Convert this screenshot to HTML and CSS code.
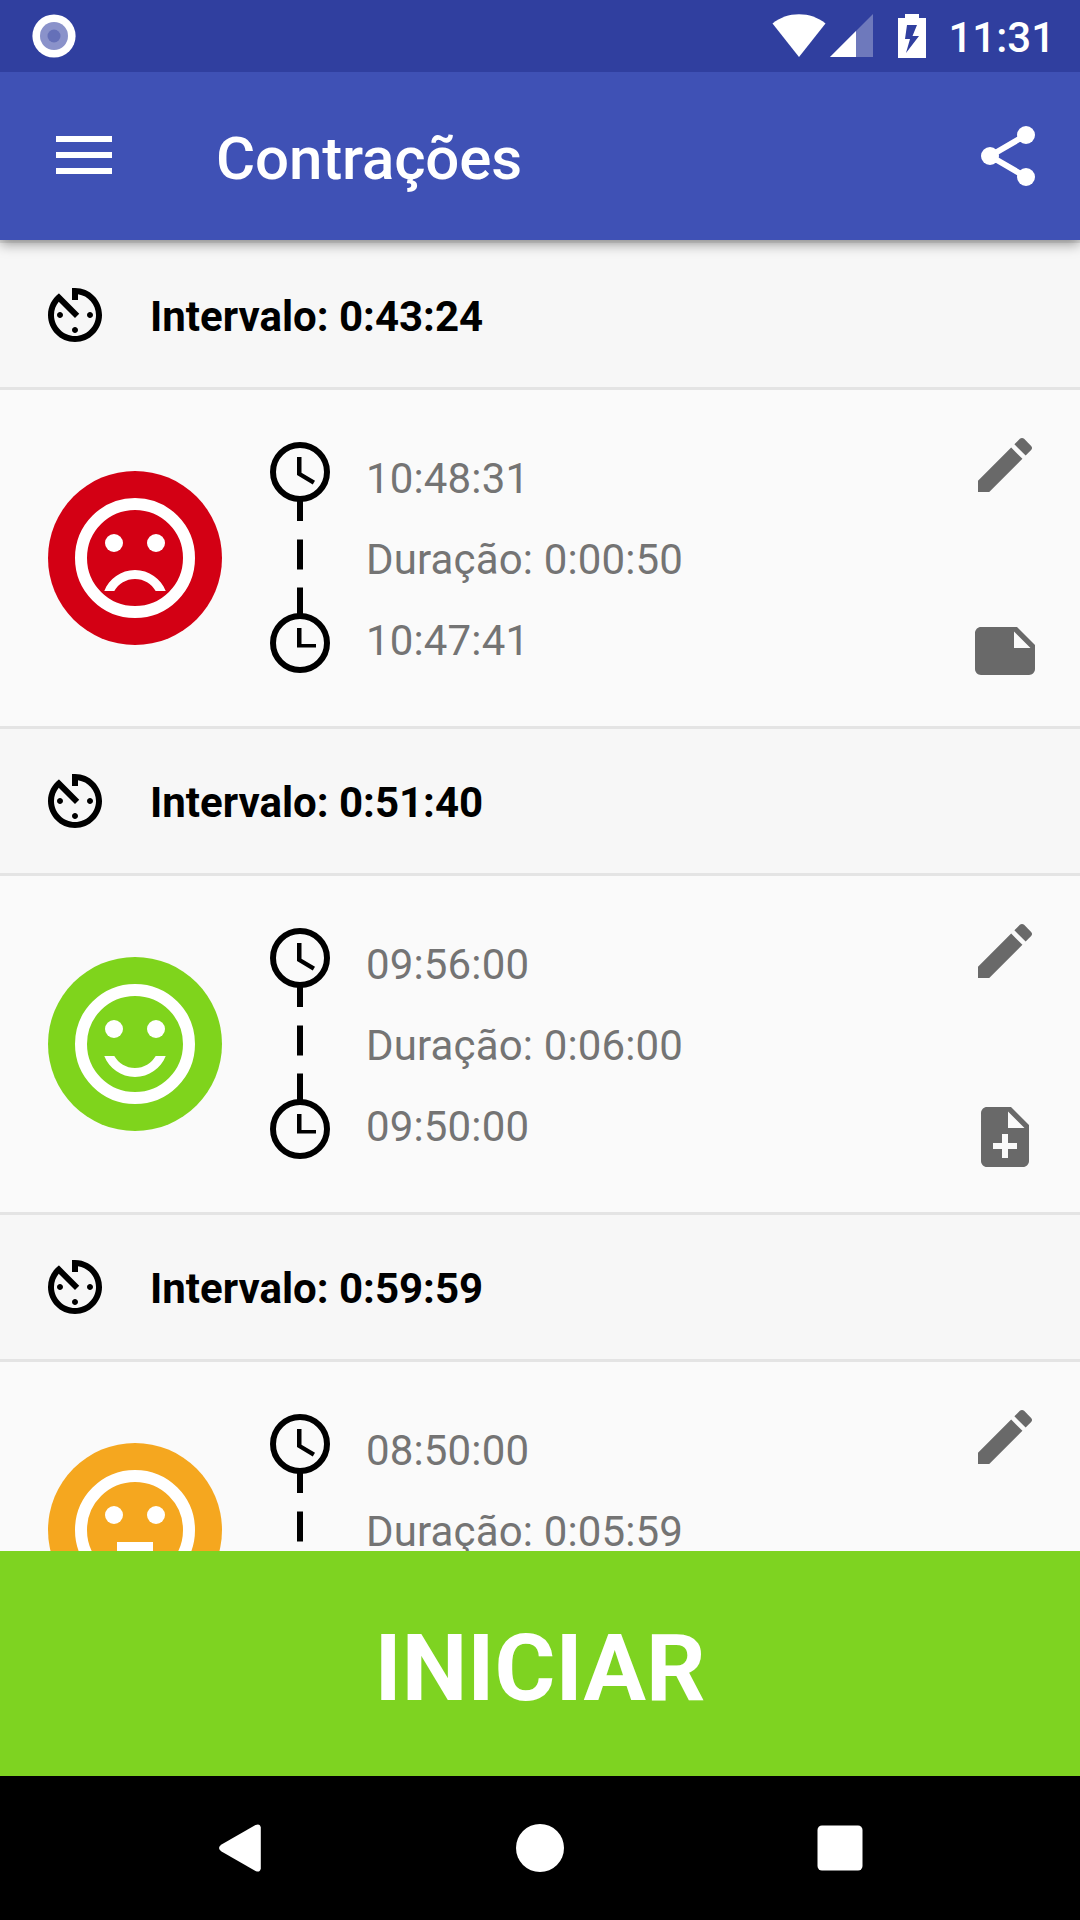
FILE: index.html
```html
<!DOCTYPE html>
<html lang="pt-BR">
<head>
    <meta charset="UTF-8">
    <meta name="viewport" content="width=device-width, initial-scale=1.0">
    <title>Contrações</title>
    <link rel="stylesheet" href="styles.css">
</head>
<body>
    <!-- shared icons -->
    <svg class="sprite">
        <symbol id="timer" viewBox="0 0 24 24">
            <path d="M11 17c0 .55.45 1 1 1s1-.45 1-1-.45-1-1-1-1 .45-1 1zm0-14v4h2V5.08c3.39.49 6 3.39 6 6.92 0 3.87-3.13 7-7 7s-7-3.13-7-7c0-1.68.59-3.22 1.58-4.42L12 13l1.41-1.41-6.8-6.8v.02C4.42 6.45 3 9.05 3 12c0 4.97 4.02 9 9 9 4.97 0 9-4.03 9-9s-4.03-9-9-9h-1zm7 9c0-.55-.45-1-1-1s-1 .45-1 1 .45 1 1 1 1-.45 1-1zM6 12c0 .55.45 1 1 1s1-.45 1-1-.45-1-1-1-1 .45-1 1z"/>
        </symbol>
        <symbol id="edit" viewBox="0 0 24 24">
            <path d="M3 17.25V21h3.75L17.81 9.94l-3.75-3.75L3 17.25zM20.71 7.04c.39-.39.39-1.02 0-1.41l-2.34-2.34c-.39-.39-1.02-.39-1.41 0l-1.83 1.83 3.75 3.75 1.83-1.83z"/>
        </symbol>
        <symbol id="note" viewBox="0 0 24 24">
            <path d="M22 10l-6-6H4c-1.1 0-2 .9-2 2v12.01c0 1.1.9 1.99 2 1.99l16-.01c1.1 0 2-.89 2-1.99v-8zm-7-4.5l5.5 5.5H15V5.5z"/>
        </symbol>
        <symbol id="note-add" viewBox="0 0 24 24">
            <path d="M14 2H6c-1.1 0-1.99.9-1.99 2L4 20c0 1.1.89 2 1.99 2H18c1.1 0 2-.9 2-2V8l-6-6zm2 14h-3v3h-2v-3H8v-2h3v-3h2v3h3v2zm-3-7V3.5L18.5 9H13z"/>
        </symbol>
        <symbol id="face" viewBox="0 0 24 24">
            <circle cx="12" cy="12" r="9" fill="none" stroke="#fff" stroke-width="2"/>
            <circle cx="8.5" cy="9.5" r="1.5"/>
            <circle cx="15.5" cy="9.5" r="1.5"/>
        </symbol>
        <symbol id="timeline" viewBox="0 0 60 231">
            <g fill="none" stroke="#000" stroke-width="6">
                <circle cx="30" cy="30" r="27"/>
                <circle cx="30" cy="201" r="27"/>
                <path d="M30 58v21M30 97.5v30M30 145.5v27"/>
            </g>
            <path d="M27 15h4.500v15.750L45 38.760l-2.250 3.690L27 33z"/>
            <path d="M27 186h4.500v16H46v3.500H27z"/>
        </symbol>
    </svg>

    <div class="status-bar">
        <svg class="notification" viewBox="0 0 44 44">
            <circle cx="22" cy="22" r="21.600" fill="#fff"/>
            <circle cx="22" cy="22" r="14" fill="#8a92ca"/>
            <circle cx="22" cy="22" r="6.500" fill="#6570b8"/>
        </svg>
        <svg class="wifi" viewBox="0 0 54 44">
            <path d="M27 43L.5 9.500C8 3.500 17 .3 27 .3s19 3.200 26.500 9.200z" fill="#fff"/>
        </svg>
        <svg class="signal" viewBox="0 0 43 44">
            <path d="M43 0v43H0z" fill="#fff" fill-opacity=".3"/>
            <path d="M26 17v26H0z" fill="#fff"/>
        </svg>
        <svg class="battery" viewBox="0 0 28 44">
            <path fill-rule="evenodd" d="M7 0h14v4h7v40H0V4h7zM9 11L7 25h5L8 39l13-17h-6.500L19 11z" fill="#fff"/>
        </svg>
        <span class="clock">11:31</span>
    </div>

    <header class="toolbar">
        <svg class="menu" viewBox="0 0 56 38">
            <path d="M0 0h56v6H0zM0 16h56v6H0zM0 32h56v6H0z"/>
        </svg>
        <h1>Contrações</h1>
        <svg class="icon" viewBox="0 0 24 24">
            <path d="M6 12L18 5M6 12l12 7" stroke="#fff" stroke-width="2"/>
            <circle cx="18" cy="5" r="3"/>
            <circle cx="6" cy="12" r="3"/>
            <circle cx="18" cy="19" r="3"/>
        </svg>
    </header>

    <main class="list">
        <div class="interval">
            <svg class="icon"><use href="#timer"/></svg>
            <span>Intervalo: 0:43:24</span>
        </div>
        <div class="contraction">
            <div class="mood strong">
                <svg viewBox="0 0 24 24">
                    <use href="#face"/>
                    <path d="M12 14c-2.330 0-4.320 1.450-5.120 3.500h1.670c.69-1.190 1.970-2 3.450-2s2.750.81 3.450 2h1.670c-.8-2.050-2.790-3.500-5.120-3.500z"/>
                </svg>
            </div>
            <svg class="timeline"><use href="#timeline"/></svg>
            <div class="times">
                <p>10:48:31</p>
                <p>Duração: 0:00:50</p>
                <p>10:47:41</p>
            </div>
            <div class="actions">
                <svg class="icon"><use href="#edit"/></svg>
                <svg class="icon"><use href="#note"/></svg>
            </div>
        </div>

        <div class="interval">
            <svg class="icon"><use href="#timer"/></svg>
            <span>Intervalo: 0:51:40</span>
        </div>
        <div class="contraction">
            <div class="mood weak">
                <svg viewBox="0 0 24 24">
                    <use href="#face"/>
                    <path d="M12 16c-1.480 0-2.750-.81-3.450-2H6.880c.8 2.050 2.790 3.500 5.120 3.500s4.320-1.450 5.120-3.500h-1.670c-.7 1.190-1.970 2-3.450 2z"/>
                </svg>
            </div>
            <svg class="timeline"><use href="#timeline"/></svg>
            <div class="times">
                <p>09:56:00</p>
                <p>Duração: 0:06:00</p>
                <p>09:50:00</p>
            </div>
            <div class="actions">
                <svg class="icon"><use href="#edit"/></svg>
                <svg class="icon"><use href="#note-add"/></svg>
            </div>
        </div>

        <div class="interval">
            <svg class="icon"><use href="#timer"/></svg>
            <span>Intervalo: 0:59:59</span>
        </div>
        <div class="contraction">
            <div class="mood medium">
                <svg viewBox="0 0 24 24">
                    <use href="#face"/>
                    <path d="M9 14h6v1.500H9z"/>
                </svg>
            </div>
            <svg class="timeline"><use href="#timeline"/></svg>
            <div class="times">
                <p>08:50:00</p>
                <p>Duração: 0:05:59</p>
            </div>
            <div class="actions">
                <svg class="icon"><use href="#edit"/></svg>
            </div>
        </div>
    </main>

    <button type="button" class="start-btn">INICIAR</button>

    <nav class="nav-bar">
        <svg viewBox="0 0 48 48">
            <path d="M5.500 20.500L39.500 1Q44-1 44.800 3.500v41Q44 49 39.500 47L5.500 27.500Q.5 24 5.500 20.500z"/>
        </svg>
        <svg viewBox="0 0 48 48">
            <circle cx="24" cy="24" r="24"/>
        </svg>
        <svg viewBox="0 0 48 48">
            <rect x="1.500" y="1.500" width="45" height="45" rx="4.500"/>
        </svg>
    </nav>
</body>
</html>
```
FILE: styles.css
```css
* {
    margin: 0;
    padding: 0;
    box-sizing: border-box;
    font-family: Roboto, sans-serif;
}

body {
    display: flex;
    flex-direction: column;
    height: 1920px;
    overflow: hidden;
    background-color: #fafafa;
}

svg {
    display: block;
    flex-shrink: 0;
}

.sprite {
    display: none;
}

.icon {
    width: 72px;
    height: 72px;
}

/* status bar */
.status-bar {
    display: flex;
    align-items: center;
    flex-shrink: 0;
    height: 72px;
    padding: 0 25px 0 32px;
    background-color: #303f9f;
    z-index: 2;
}

.notification {
    width: 44px;
    height: 44px;
}

.wifi {
    width: 54px;
    height: 44px;
    margin-left: auto;
}

.signal {
    width: 43px;
    height: 44px;
    margin-left: 4px;
}

.battery {
    width: 28px;
    height: 44px;
    margin-left: 25px;
}

.clock {
    margin-left: 22px;
    padding-top: 3px;
    color: #fff;
    font-size: 42px;
    font-weight: 500;
}

/* toolbar */
.toolbar {
    display: flex;
    align-items: center;
    flex-shrink: 0;
    height: 168px;
    padding: 0 36px 0 56px;
    background-color: #3f51b5;
    fill: #fff;
    box-shadow: 0 4px 12px rgba(0, 0, 0, 0.4);
    z-index: 1;
}

.menu {
    width: 56px;
    height: 38px;
    margin-bottom: 2px;
}

.toolbar h1 {
    flex: 1;
    margin-left: 104px;
    padding-top: 5px;
    color: #fff;
    font-size: 60px;
    font-weight: 500;
    letter-spacing: -0.15px;
}

/* list */
.list {
    flex: 1;
    min-height: 0;
    overflow: hidden;
}

.interval {
    display: flex;
    align-items: center;
    height: 150px;
    padding-left: 39px;
    background-color: #f7f7f7;
    border-top: 3px solid #e4e4e4;
    border-bottom: 3px solid #e4e4e4;
}

.interval span {
    margin-left: 39px;
    padding-top: 3px;
    font-size: 42px;
    font-weight: 700;
}

.contraction {
    display: flex;
    height: 336px;
    padding: 0 39px 0 48px;
}

.mood {
    display: flex;
    align-items: center;
    justify-content: center;
    width: 174px;
    height: 174px;
    margin-top: 81px;
    border-radius: 50%;
    fill: #fff;
}

.mood svg {
    width: 144px;
    height: 144px;
}

.strong {
    background-color: #d30014;
}

.weak {
    background-color: #7fd41c;
}

.medium {
    background-color: #f5a71f;
}

.timeline {
    width: 60px;
    height: 231px;
    margin: 52px 0 0 48px;
}

.times {
    flex: 1;
    margin: 48px 0 0 36px;
    color: #747474;
    font-size: 42px;
    line-height: 81px;
    letter-spacing: 0.15px;
}

.actions {
    display: flex;
    flex-direction: column;
    gap: 114px;
    margin-top: 39px;
    fill: #696969;
}

/* bottom */
.start-btn {
    flex-shrink: 0;
    height: 225px;
    padding-top: 9px;
    border: none;
    background-color: #7ed321;
    color: #fff;
    font-size: 93px;
    font-weight: 700;
}

.nav-bar {
    display: flex;
    align-items: center;
    justify-content: space-between;
    flex-shrink: 0;
    height: 144px;
    padding: 0 216px;
    background-color: #000;
    fill: #fff;
}

.nav-bar svg {
    width: 48px;
    height: 48px;
}
```
